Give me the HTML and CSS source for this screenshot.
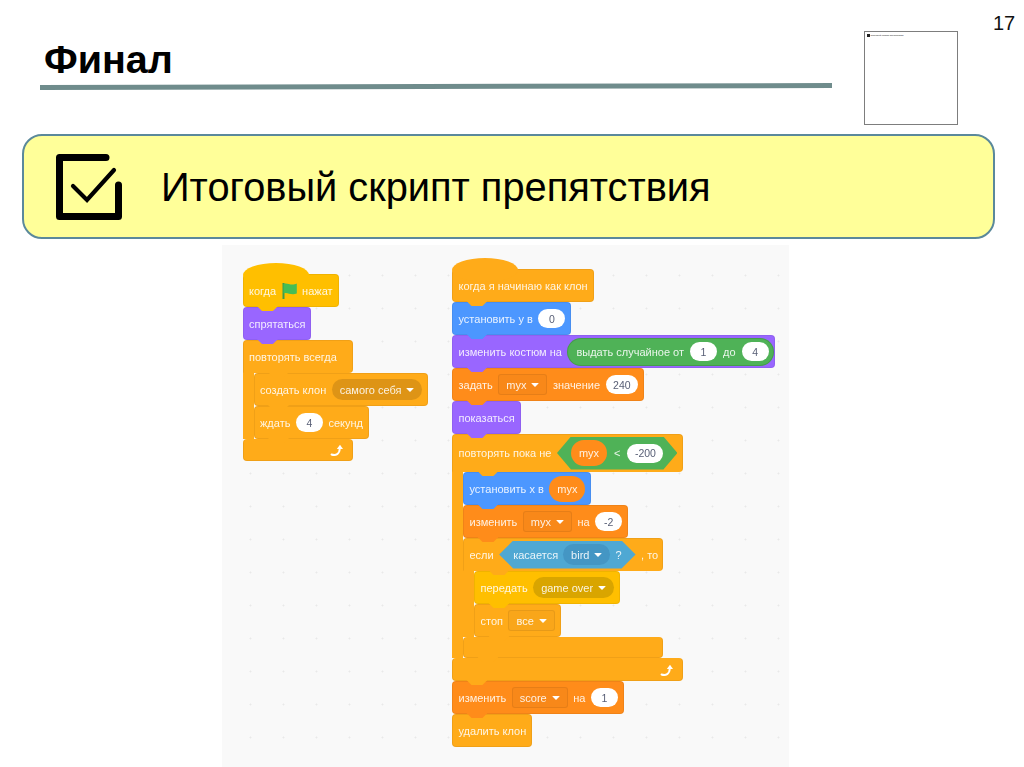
FILE: index.html
```
<!DOCTYPE html>
<html lang="ru">
<head>
<meta charset="utf-8">
<title>Финал</title>
<link rel="stylesheet" href="styles.css">
</head>
<body>
<main class="slide">
  <header class="top">
    <div class="heading">
      <h1 class="title">Финал</h1>
      <div class="rule"></div>
    </div>
    <div class="thumb"><i class="thumb-mark"></i><span class="thumb-text">Итоговый скрипт препятствия</span></div>
    <div class="page-num">17</div>
  </header>
  <section class="banner">
    <svg class="check" viewBox="0 0 66 66" aria-hidden="true">
      <path d="M50 3.500H3.500V62.500H62.500V31" fill="none" stroke="#000" stroke-width="7" stroke-linecap="round" stroke-linejoin="round"/>
      <path d="M17 32L31 46L58 16" fill="none" stroke="#000" stroke-width="4.200" stroke-linecap="round" stroke-linejoin="miter"/>
    </svg>
    <h2 class="banner-text">Итоговый скрипт препятствия</h2>
  </section>
  <section class="canvas">
    <div class="stack stack-left">
      <div class="block hat events">
        <span>когда</span>
        <svg class="flag" viewBox="0 0 15 18" aria-hidden="true"><path d="M1.500 1V17" stroke="#3f9a4a" stroke-width="2"/><path d="M1.500 2C5 0 9 4.500 14.800 1.500V11.500C9 14 5 9.500 1.500 11.500Z" fill="#45bd55"/></svg>
        <span>нажат</span>
      </div>
      <div class="block looks"><span>спрятаться</span></div>
      <div class="c">
        <div class="block control w110"><span>повторять всегда</span></div>
        <div class="c-body control-arm">
          <div class="block control">
            <span>создать клон</span>
            <span class="drop pill dark-control">самого себя<i class="caret"></i></span>
          </div>
          <div class="block control">
            <span>ждать</span><span class="num">4</span><span>секунд</span>
          </div>
        </div>
        <div class="block control foot w110 foot22 no-tab">
          <svg class="loop" viewBox="0 0 14 14" aria-hidden="true"><path d="M1.500 11.500C6 13 9.500 11 9.800 5.500" fill="none" stroke="#fff" stroke-width="1.900" stroke-linecap="round"/><path d="M6.800 6L10 1.800L13 6Z" fill="#fff"/></svg>
        </div>
      </div>
    </div>
    <div class="stack stack-right">
      <div class="block hat control"><span>когда я начинаю как клон</span></div>
      <div class="block motion"><span>установить у в</span><span class="num">0</span></div>
      <div class="block looks tight-right">
        <span>изменить костюм на</span>
        <span class="reporter operators"><span>выдать случайное от</span><span class="num">1</span><span>до</span><span class="num">4</span></span>
      </div>
      <div class="block vars">
        <span>задать</span><span class="drop rect">myx<i class="caret"></i></span><span>значение</span><span class="num">240</span>
      </div>
      <div class="block looks"><span>показаться</span></div>
      <div class="c">
        <div class="block control tall w231">
          <span>повторять пока не</span>
          <span class="hex operators"><span class="var">myx</span><span>&lt;</span><span class="num">-200</span></span>
        </div>
        <div class="c-body control-arm">
          <div class="block motion"><span>установить х в</span><span class="var">myx</span></div>
          <div class="block vars"><span>изменить</span><span class="drop rect">myx<i class="caret"></i></span><span>на</span><span class="num">-2</span></div>
          <div class="c">
            <div class="block control w200">
              <span>если</span>
              <span class="hex hex-short sensing"><span>касается</span><span class="drop pill dark-sensing">bird<i class="caret"></i></span><span>?</span></span>
              <span>, то</span>
            </div>
            <div class="c-body control-arm">
              <div class="block events"><span>передать</span><span class="drop pill dark-events">game over<i class="caret"></i></span></div>
              <div class="block control"><span>стоп</span><span class="drop rect rect-control">все<i class="caret"></i></span></div>
            </div>
            <div class="block control foot w200 foot21"></div>
          </div>
        </div>
        <div class="block control foot w231 foot23">
          <svg class="loop" viewBox="0 0 14 14" aria-hidden="true"><path d="M1.500 11.500C6 13 9.500 11 9.800 5.500" fill="none" stroke="#fff" stroke-width="1.900" stroke-linecap="round"/><path d="M6.800 6L10 1.800L13 6Z" fill="#fff"/></svg>
        </div>
      </div>
      <div class="block vars"><span>изменить</span><span class="drop rect">score<i class="caret"></i></span><span>на</span><span class="num">1</span></div>
      <div class="block control no-tab"><span>удалить клон</span></div>
    </div>
  </section>
</main>
</body>
</html>
```
FILE: styles.css
```
* { box-sizing: border-box; }
html, body { margin: 0; padding: 0; background: #fff; }
body { font-family: "Liberation Sans", Arial, sans-serif; color: #000; }
.slide { width: 1024px; height: 767px; overflow: hidden; display: flex; flex-direction: column; }

.top { height: 134px; display: flex; align-items: flex-start; padding-left: 40px; }
.heading { width: 792px; padding-top: 36px; }
.title { margin: 0; padding-left: 4px; font-size: 39.500px; line-height: 46px; font-weight: 700; }
.rule { margin-top: 2px; height: 4.500px; background: #6f8c8c; transform: rotate(-0.14deg); }
.thumb { width: 94px; height: 94px; margin: 31px 0 0 32px; border: 1px solid #7d7d7d; background: #fff; padding: 1.500px 2px; display: flex; align-items: flex-start; gap: 1px; }
.thumb-mark { width: 2.500px; height: 3px; background: #222; flex: none; }
.thumb-text { font-size: 2.400px; line-height: 3px; white-space: nowrap; color: #222; }
.page-num { margin: 10px 0 0 35px; font-size: 20px; line-height: 26px; color: #111; }

.banner { margin-left: 22px; width: 973px; height: 105px; border: 2px solid #5b899b; border-radius: 20px; background: #ffff99; display: flex; align-items: center; padding-left: 32px; }
.check { width: 66px; height: 66px; flex: none; }
.banner-text { margin: 0 0 0 39px; font-size: 39.800px; line-height: 44px; font-weight: 400; }

.canvas { margin: 6px 0 0 222px; width: 567px; flex: 1; background-color: #f9f9f9; background-image: radial-gradient(circle, #e9e9e9 0.8px, transparent 1.2px); background-size: 33px 33px; background-position: 12px 14px; display: flex; align-items: flex-start; padding-left: 21px; gap: 24px; filter: blur(0.35px); }
.stack { display: flex; flex-direction: column; align-items: flex-start; }
.stack-left { padding-top: 29px; }
.stack-right { padding-top: 24px; }

.block { position: relative; display: flex; align-items: center; gap: 5.500px; height: 33px; padding: 0 5px; border-radius: 4px; border: 1px solid rgba(0,0,0,.06); color: rgba(255,255,255,.88); font-size: 11px; white-space: nowrap; flex: none; }
.block::after { content: ""; position: absolute; left: 13px; bottom: -5px; width: 21px; height: 5px; background: inherit; clip-path: polygon(0 0, 100% 0, 76% 100%, 24% 100%); z-index: 2; }
.c > .block:first-child::after { left: 24px; }
.c > .block:first-child { border-radius: 4px 4px 4px 0; border-bottom-color: transparent; }
.no-tab::after { content: none; }
.tight-right { padding-right: 0; }
.hat::before { content: ""; position: absolute; left: -1px; top: -12px; width: 66px; height: 24px; border-radius: 50%; background: inherit; }
.hat > span, .hat > svg { position: relative; }

.events { background-color: #ffbf00; }
.looks { background-color: #9966ff; }
.control { background-color: #ffab19; }
.motion { background-color: #4c97ff; }
.vars { background-color: #ff8c1a; }
.operators { background-color: #4fb257; }
.sensing { background-color: #4fa8d3; }

.c { display: flex; flex-direction: column; align-items: flex-start; }
.c-body { display: flex; flex-direction: column; align-items: flex-start; }
.control-arm { border-left: 11px solid #ffab19; }
.foot { justify-content: flex-end; padding-right: 8px; border-top-color: transparent; }
.tall { height: 38px; }
.w110 { width: 110px; }
.w200 { width: 200px; }
.w231 { width: 231px; }
.foot21 { height: 21px; }
.foot22 { height: 22px; }
.foot23 { height: 23px; }

.num { min-width: 27px; height: 19px; padding: 0 7.500px; border-radius: 10px; background: #fff; color: #575e75; display: flex; align-items: center; justify-content: center; font-size: 10.500px; }
.var { min-width: 36px; height: 26px; padding: 0 6px; border-radius: 13px; background: #ff8c1a; color: rgba(255,255,255,.88); display: flex; align-items: center; justify-content: center; }
.reporter { height: 28px; padding: 0 4px 0 8px; border-radius: 14px; display: flex; align-items: center; gap: 6px; border: 1px solid rgba(0,0,0,.12); }
.hex { height: 33px; padding: 0 14px; display: flex; align-items: center; gap: 7px; clip-path: polygon(0 50%, 14px 0, calc(100% - 14px) 0, 100% 50%, calc(100% - 14px) 100%, 14px 100%); }
.hex-short { height: 28px; gap: 5px; }
.drop { height: 21px; padding: 0 8px; display: flex; align-items: center; gap: 5px; }
.pill { border-radius: 11px; }
.rect { padding: 0 7px; border-radius: 3px; background: #f88819; border: 1px solid rgba(0,0,0,.07); }
.rect-control { background: #f9a61a; }
.dark-control { background: #de9416; }
.dark-sensing { background: #4496c4; }
.dark-events { background: #d9a500; }
.caret { width: 0; height: 0; border-left: 4px solid transparent; border-right: 4px solid transparent; border-top: 4px solid #fff; border-radius: 1px; flex: none; }
.flag { width: 15px; height: 18px; flex: none; }
.loop { width: 14px; height: 14px; flex: none; }
```
